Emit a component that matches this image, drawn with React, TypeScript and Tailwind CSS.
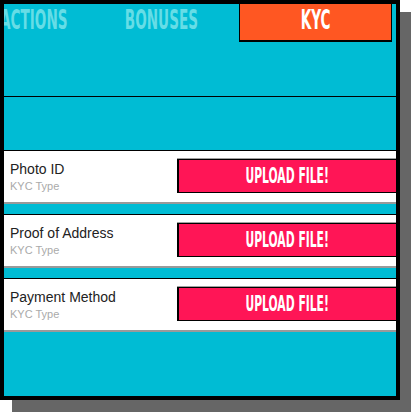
const condensed = {
  fontFamily: '"Liberation Sans Narrow", "DejaVu Sans Condensed", "DejaVu Sans", sans-serif',
  fontStretch: 'condensed' as const,
}

const docs = ['Photo ID', 'Proof of Address', 'Payment Method']

function KycRow({ title }: { title: string }) {
  return (
    <div className="flex h-[54px] shrink-0 bg-white border-t border-black border-b-2 border-b-[#9a9a9a]">
      <div className="w-[173px] shrink-0 pl-[6px] pt-[8px]" style={{ fontFamily: '"Liberation Sans", Arial, sans-serif' }}>
        <div className="text-[14px] leading-[20px] text-[#222]">{title}</div>
        <div className="text-[11px] leading-[14px] text-[#aaa]">KYC Type</div>
      </div>
      <div className="flex-1 pt-[8px]">
        <button className="flex h-[34px] w-full items-center justify-center border-y border-l-2 border-black bg-[#ff1556] shadow-[0_-1px_0_#a0a0a0]">
          <span
            className="inline-block scale-x-[0.57] text-[21px] font-bold leading-none text-white whitespace-nowrap"
            style={condensed}
          >
            UPLOAD FILE!
          </span>
        </button>
      </div>
    </div>
  )
}

export default function App() {
  return (
    <div className="h-[412px] w-[411px] bg-white">
      <div className="h-[400px] w-[400px] overflow-hidden border-4 border-black bg-[#00bcd4] shadow-[12px_12px_0_#666]">
        {/* Tabs header */}
        <div className="h-[93px] border-b border-black">
          <div className="flex h-[38px] items-start">
            <div className="flex w-[64px] shrink-0 justify-end overflow-hidden pt-[1px]">
              <span
                className="inline-block origin-right scale-x-[0.56] text-[27px] font-bold leading-[30px] text-[#66dde6] whitespace-nowrap"
                style={condensed}
              >
                TRANSACTIONS
              </span>
            </div>
            <div className="flex w-[171px] shrink-0 justify-center pl-[15px] pt-[1px]">
              <span
                className="inline-block scale-x-[0.56] text-[27px] font-bold leading-[30px] text-[#66dde6] whitespace-nowrap"
                style={condensed}
              >
                BONUSES
              </span>
            </div>
            <div className="flex h-[38px] w-[153px] shrink-0 items-start justify-center border-x border-b-2 border-black bg-[#ff5722] pt-[1px]">
              <span
                className="inline-block scale-x-[0.56] text-[27px] font-bold leading-[30px] text-white whitespace-nowrap"
                style={condensed}
              >
                KYC
              </span>
            </div>
          </div>
        </div>

        {/* Documents */}
        <div className="flex flex-col gap-[10px] pt-[53px]">
          {docs.map((d) => (
            <KycRow key={d} title={d} />
          ))}
        </div>
      </div>
    </div>
  )
}
